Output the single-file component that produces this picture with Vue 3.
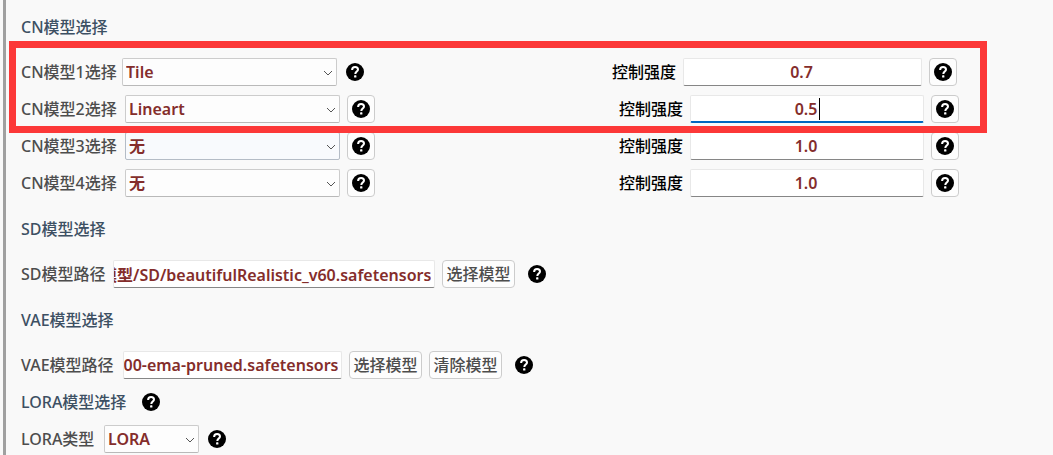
<script setup>
import { h, nextTick, onMounted, reactive, ref } from 'vue'

const HelpIcon = () =>
  h('svg', { viewBox: '0 0 18 18', width: 18, height: 18, 'aria-hidden': 'true' }, [
    h('circle', { cx: 9, cy: 9, r: 9, fill: '#000' }),
    h('path', {
      d: 'M6.1 6.9C6.1 5 7.4 4 9.1 4s2.9 1 2.9 2.5c0 2-2.7 2.2-2.7 4.5',
      fill: 'none',
      stroke: '#fff',
      'stroke-width': 2,
    }),
    h('rect', { x: 8.1, y: 12.3, width: 2.3, height: 2.3, rx: 0.4, fill: '#fff' }),
  ])

const Chevron = () =>
  h('svg', { viewBox: '0 0 10 6', width: 10, height: 6, 'aria-hidden': 'true' }, [
    h('path', { d: 'M1 1l4 4 4-4', fill: 'none', stroke: '#555', 'stroke-width': 1 }),
  ])

const models = ['无', 'Tile', 'Lineart']
const primary = reactive([
  { n: 1, model: 'Tile', weight: '0.7', bare: true },
  { n: 2, model: 'Lineart', weight: '0.5', caret: true },
])
const secondary = reactive([
  { n: 3, model: '无', weight: '1.0', hover: true },
  { n: 4, model: '无', weight: '1.0' },
])
const groups = [
  { name: 'primary', rows: primary, marked: true },
  { name: 'secondary', rows: secondary, marked: false },
]

const sdPath = ref('模型/SD/beautifulRealistic_v60.safetensors')
const vaePath = ref('vae-ft-mse-840000-ema-pruned.safetensors')
const loraType = ref('LORA')
const sdInput = ref(null)
const vaeInput = ref(null)

onMounted(async () => {
  await nextTick()
  for (const el of [sdInput.value, vaeInput.value]) el.scrollLeft = el.scrollWidth
})
</script>

<template>
  <main class="panel">
    <h2 class="heading tall">CN模型选择</h2>
    <div v-for="g in groups" :key="g.name" class="group">
      <div v-for="r in g.rows" :key="r.n" class="cn-row" :class="{ first: r.bare }">
        <div class="part">
          <label class="label cn-label" :for="'model' + r.n">CN模型{{ r.n }}选择</label>
          <span class="select-box model-box" :class="{ hover: r.hover }">
            <select :id="'model' + r.n" v-model="r.model">
              <option v-for="m in models" :key="m">{{ m }}</option>
            </select>
            <Chevron class="chevron" />
          </span>
          <button class="help" :class="{ bare: r.bare }" type="button" aria-label="帮助"><HelpIcon /></button>
        </div>
        <div class="part weight-part">
          <label class="label strong" :for="'weight' + r.n">控制强度</label>
          <span class="weight-box">
            <input :id="'weight' + r.n" v-model="r.weight" class="text weight" :class="{ active: r.caret }" type="text" />
            <span v-if="r.caret" class="caret"></span>
          </span>
          <button class="help" type="button" aria-label="帮助"><HelpIcon /></button>
        </div>
      </div>
      <div v-if="g.marked" class="marker"></div>
    </div>

    <h2 class="heading tall">SD模型选择</h2>
    <div class="row">
      <label class="label sd-label" for="sd">SD模型路径</label>
      <input id="sd" ref="sdInput" v-model="sdPath" class="text sd-path" type="text" />
      <button class="action" type="button">选择模型</button>
      <button class="help bare wide" type="button" aria-label="帮助"><HelpIcon /></button>
    </div>

    <h2 class="heading tall">VAE模型选择</h2>
    <div class="row">
      <label class="label vae-label" for="vae">VAE模型路径</label>
      <input id="vae" ref="vaeInput" v-model="vaePath" class="text vae-path" type="text" />
      <button class="action" type="button">选择模型</button>
      <button class="action" type="button">清除模型</button>
      <button class="help bare wide" type="button" aria-label="帮助"><HelpIcon /></button>
    </div>

    <div class="row">
      <h2 class="heading lora-heading">LORA模型选择</h2>
      <button class="help bare" type="button" aria-label="帮助"><HelpIcon /></button>
    </div>
    <div class="row">
      <label class="label lora-label" for="lora">LORA类型</label>
      <span class="select-box lora-box">
        <select id="lora" v-model="loraType">
          <option>LORA</option>
          <option>LyCORIS</option>
        </select>
        <Chevron class="chevron" />
      </span>
      <button class="help bare" type="button" aria-label="帮助"><HelpIcon /></button>
    </div>
  </main>
</template>

<style>
html {
  overflow: hidden;
  background: #f9f9f9;
}
</style>

<style scoped>
.panel,
.panel button {
  font-family: "Noto Sans", "Noto Sans CJK SC", sans-serif;
  font-size: 16px;
  font-weight: 500;
}
.panel input,
.panel select {
  font-family: "Noto Sans", "Noto Sans CJK SC", sans-serif;
  font-size: 16px;
  font-weight: 600;
}
.panel {
  box-sizing: border-box;
  min-height: 100vh;
  margin-left: 3px;
  padding-left: 15px;
  border-left: 3px solid #a0a0a0;
  background: #f9f9f9;
  color: #4d4d4d;
}
.heading {
  margin: 0;
  font-size: 16px;
  font-weight: 500;
  line-height: 36px;
  color: #3d5063;
  white-space: nowrap;
}
.heading.tall {
  line-height: 54px;
}
.group {
  position: relative;
}
.row,
.cn-row {
  box-sizing: border-box;
  height: 37px;
  padding-bottom: 1px;
  align-items: center;
}
.row,
.part {
  display: flex;
  align-items: center;
  gap: 7px;
  min-width: 0;
}
.cn-row {
  display: grid;
  grid-template-columns: 598fr 340fr 94fr;
}
.cn-row.first {
  grid-template-columns: 591fr 345fr 96fr;
}
.label {
  flex: none;
  line-height: 24px;
  padding-bottom: 1px;
  white-space: nowrap;
}
.strong {
  color: #000;
}
.cn-label {
  width: 97px;
}
.first .cn-label {
  width: 94px;
}
.sd-label {
  width: 85px;
}
.vae-label {
  width: 95px;
}
.lora-heading {
  width: 112px;
}
.lora-label {
  width: 76px;
}
.select-box {
  position: relative;
  flex: none;
  height: 28px;
}
.model-box {
  width: 215px;
}
.lora-box {
  width: 95px;
}
select {
  appearance: none;
  box-sizing: border-box;
  width: 100%;
  height: 28px;
  padding: 0 24px 1px 3px;
  border: 1px solid #ccc;
  border-bottom-color: #b9b9b9;
  border-radius: 2px;
  background: #fdfdfd;
  color: #842d2b;
  outline: none;
}
.hover select {
  border-color: #b4bcc6;
  background: #f8fafd;
}
.chevron {
  position: absolute;
  right: 4px;
  top: 12px;
  pointer-events: none;
}
.text {
  box-sizing: border-box;
  height: 28px;
  padding: 0 3px 1px 0;
  border: 1px solid #e8e8e8;
  border-bottom-color: #868686;
  border-radius: 2px;
  background: #fff;
  color: #842d2b;
  outline: none;
}
.sd-path {
  width: 322px;
}
.vae-path {
  width: 219px;
}
.weight-box {
  position: relative;
  display: flex;
  flex: 1;
  min-width: 0;
}
.weight {
  width: 100%;
  padding: 0 2px 0 0;
  text-align: center;
}
.weight.active {
  border-bottom: 2px solid #0067c0;
}
.caret {
  position: absolute;
  left: calc(50% + 12px);
  top: 3px;
  width: 1px;
  height: 22px;
  background: #000;
}
.action {
  box-sizing: border-box;
  flex: none;
  width: 73px;
  height: 28px;
  padding: 0 0 2px;
  border: 1px solid #ccc;
  border-radius: 4px;
  background: #fdfdfd;
  color: #4d4d4d;
}
.help {
  display: flex;
  box-sizing: border-box;
  flex: none;
  align-items: center;
  justify-content: center;
  width: 28px;
  height: 28px;
  padding: 0;
  border: 1px solid #ccc;
  border-radius: 4px;
  background: #fdfdfd;
}
.help.bare {
  width: 22px;
  border-color: transparent;
  background: transparent;
}
.help.wide {
  width: 30px;
}
.marker {
  position: absolute;
  top: -13px;
  right: 66px;
  bottom: -5px;
  left: -12px;
  z-index: 1;
  border: 7px solid #fc3838;
  pointer-events: none;
}
</style>
